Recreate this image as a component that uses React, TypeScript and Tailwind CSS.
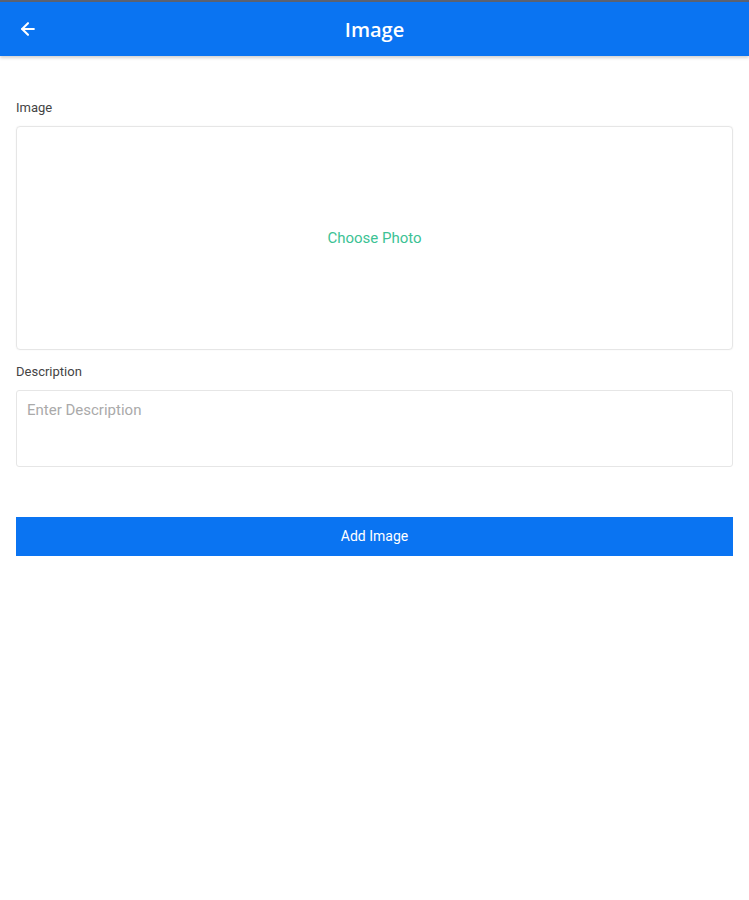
import { ArrowLeft } from 'lucide-react'

export default function App() {
  return (
    <div className="min-h-screen w-full bg-white font-['Roboto',sans-serif]">
      {/* Header */}
      <div className="h-[2px] bg-[#5b6272]" />
      <header className="relative flex h-[54px] items-center justify-center bg-[#0a74f2] pt-[2px] shadow-[0_2px_3px_rgba(0,0,0,0.18)]">
        <button className="absolute left-[18px] top-1/2 -translate-y-1/2 text-white">
          <ArrowLeft className="h-[20px] w-[20px]" strokeWidth={2.5} />
        </button>
        <h1 className="font-['Open_Sans',sans-serif] text-[20px] font-semibold text-white">Image</h1>
      </header>

      <main className="px-4 pt-[44px]">
        <label className="block text-[13px] leading-[16px] text-[#444]">Image</label>
        <div className="mt-[10px] flex h-[224px] items-center justify-center rounded-[4px] border border-[#e6e6e6] shadow-[0_0_2px_rgba(0,0,0,0.06)]">
          <span className="text-[15px] text-[#3cc294]">Choose Photo</span>
        </div>

        <label className="mt-[14px] block text-[13px] leading-[16px] text-[#444]">Description</label>
        <textarea
          placeholder="Enter Description"
          className="mt-[10px] block h-[77px] w-full resize-none rounded-[3px] border border-[#e6e6e6] px-[10px] py-[8px] text-[15px] text-[#333] outline-none placeholder:text-[#aaaaaa]"
        />

        <button className="mt-[50px] flex h-[39px] w-full items-center justify-center bg-[#0a74f2] text-[14px] text-white">
          Add Image
        </button>
      </main>
    </div>
  )
}
